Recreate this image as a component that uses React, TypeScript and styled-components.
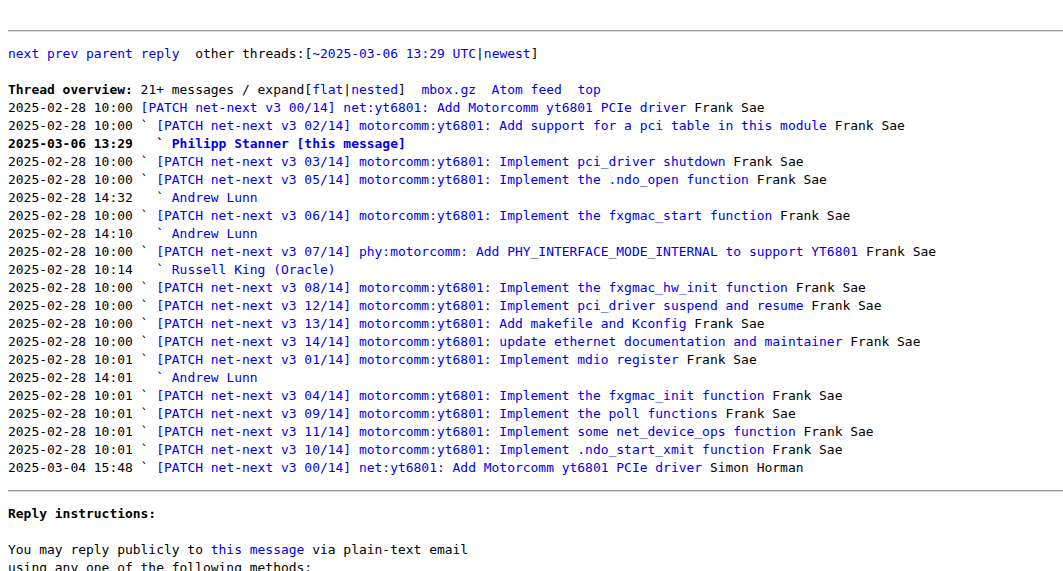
import React from "react";
import styled, { createGlobalStyle } from "styled-components";

const GlobalStyle = createGlobalStyle`
    html, body {
        margin: 0;
        background: #ffffff;
        overflow: hidden;
    }
    body {
        padding: 8px;
        color: #000000;
        font-family: "DejaVu Sans Mono", "Liberation Mono", monospace;
        font-size: 12.96px;
    }
`;

type Entry = {
    date: string;
    indent: string;
    subject: string;
    author: string;
    current?: boolean;
};

const entries: Entry[] = [
    { date: "2025-02-28 10:00", indent: "", subject: "[PATCH net-next v3 00/14] net:yt6801: Add Motorcomm yt6801 PCIe driver", author: "Frank Sae" },
    { date: "2025-02-28 10:00", indent: "` ", subject: "[PATCH net-next v3 02/14] motorcomm:yt6801: Add support for a pci table in this module", author: "Frank Sae" },
    { date: "2025-03-06 13:29", indent: "  ` ", subject: "Philipp Stanner [this message]", author: "", current: true },
    { date: "2025-02-28 10:00", indent: "` ", subject: "[PATCH net-next v3 03/14] motorcomm:yt6801: Implement pci_driver shutdown", author: "Frank Sae" },
    { date: "2025-02-28 10:00", indent: "` ", subject: "[PATCH net-next v3 05/14] motorcomm:yt6801: Implement the .ndo_open function", author: "Frank Sae" },
    { date: "2025-02-28 14:32", indent: "  ` ", subject: "Andrew Lunn", author: "" },
    { date: "2025-02-28 10:00", indent: "` ", subject: "[PATCH net-next v3 06/14] motorcomm:yt6801: Implement the fxgmac_start function", author: "Frank Sae" },
    { date: "2025-02-28 14:10", indent: "  ` ", subject: "Andrew Lunn", author: "" },
    { date: "2025-02-28 10:00", indent: "` ", subject: "[PATCH net-next v3 07/14] phy:motorcomm: Add PHY_INTERFACE_MODE_INTERNAL to support YT6801", author: "Frank Sae" },
    { date: "2025-02-28 10:14", indent: "  ` ", subject: "Russell King (Oracle)", author: "" },
    { date: "2025-02-28 10:00", indent: "` ", subject: "[PATCH net-next v3 08/14] motorcomm:yt6801: Implement the fxgmac_hw_init function", author: "Frank Sae" },
    { date: "2025-02-28 10:00", indent: "` ", subject: "[PATCH net-next v3 12/14] motorcomm:yt6801: Implement pci_driver suspend and resume", author: "Frank Sae" },
    { date: "2025-02-28 10:00", indent: "` ", subject: "[PATCH net-next v3 13/14] motorcomm:yt6801: Add makefile and Kconfig", author: "Frank Sae" },
    { date: "2025-02-28 10:00", indent: "` ", subject: "[PATCH net-next v3 14/14] motorcomm:yt6801: update ethernet documentation and maintainer", author: "Frank Sae" },
    { date: "2025-02-28 10:01", indent: "` ", subject: "[PATCH net-next v3 01/14] motorcomm:yt6801: Implement mdio register", author: "Frank Sae" },
    { date: "2025-02-28 14:01", indent: "  ` ", subject: "Andrew Lunn", author: "" },
    { date: "2025-02-28 10:01", indent: "` ", subject: "[PATCH net-next v3 04/14] motorcomm:yt6801: Implement the fxgmac_init function", author: "Frank Sae" },
    { date: "2025-02-28 10:01", indent: "` ", subject: "[PATCH net-next v3 09/14] motorcomm:yt6801: Implement the poll functions", author: "Frank Sae" },
    { date: "2025-02-28 10:01", indent: "` ", subject: "[PATCH net-next v3 11/14] motorcomm:yt6801: Implement some net_device_ops function", author: "Frank Sae" },
    { date: "2025-02-28 10:01", indent: "` ", subject: "[PATCH net-next v3 10/14] motorcomm:yt6801: Implement .ndo_start_xmit function", author: "Frank Sae" },
    { date: "2025-03-04 15:48", indent: "` ", subject: "[PATCH net-next v3 00/14] net:yt6801: Add Motorcomm yt6801 PCIe driver", author: "Simon Horman" },
];

export default function App() {
    return (
        <>
            <GlobalStyle />
            <Page>
                <Rule />
                <Block>
                    <Line>
                        <A href="#">next</A> <A href="#">prev</A> <A href="#">parent</A>{" "}
                        <A href="#">reply</A>{"  "}other threads:[<A href="#">~2025-03-06 13:29 UTC</A>|
                        <A href="#">newest</A>]
                    </Line>
                    <Line />
                    <Line>
                        <B>Thread overview:</B> 21+ messages / expand[<A href="#">flat</A>|
                        <A href="#">nested</A>]{"  "}<A href="#">mbox.gz</A>{"  "}
                        <A href="#">Atom feed</A>{"  "}<A href="#">top</A>
                    </Line>
                    {entries.map((e, i) =>
                        e.current ? (
                            <Line key={i}>
                                <B>
                                    {e.date} {e.indent}
                                    <A href="#">{e.subject}</A>
                                </B>
                            </Line>
                        ) : (
                            <Line key={i}>
                                {e.date} {e.indent}
                                <A href="#">{e.subject}</A>
                                {e.author ? ` ${e.author}` : ""}
                            </Line>
                        )
                    )}
                </Block>
                <Rule />
                <Block>
                    <Line>
                        <B>Reply instructions:</B>
                    </Line>
                    <Line />
                    <Line>
                        You may reply publicly to <A href="#">this message</A> via plain-text email
                    </Line>
                    <Line>using any one of the following methods:</Line>
                </Block>
            </Page>
        </>
    );
}

const Page = styled.div`
    display: flex;
    flex-direction: column;
    padding-top: 14px;
`;

const Rule = styled.hr`
    margin: 8px -8px 13px 0;
    height: 0;
    border: none;
    border-top: 1px solid #9a9a9a;
    border-bottom: 1px solid #dcdcdc;
`;

const Block = styled.div`
    display: flex;
    flex-direction: column;
    margin-bottom: 5px;
`;

const Line = styled.div`
    height: 18px;
    line-height: 18px;
    white-space: pre;
`;

const A = styled.a`
    color: #0000ee;
    text-decoration: none;
`;

const B = styled.b`
    font-weight: bold;
`;
